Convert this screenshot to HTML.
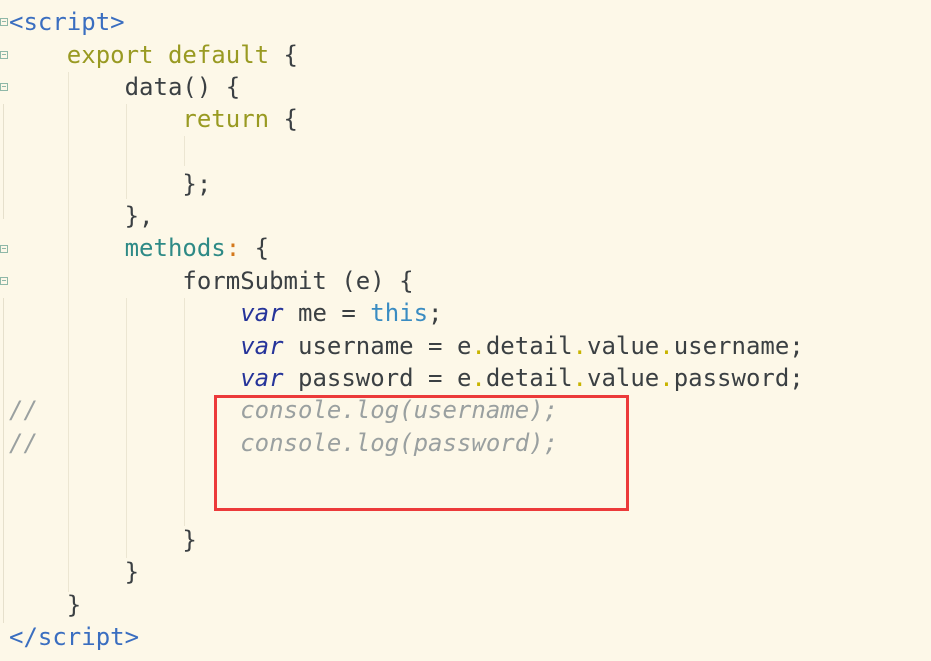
<!DOCTYPE html>
<html><head><meta charset="utf-8"><style>
html,body{margin:0;padding:0}
body{width:931px;height:661px;background:#fdf8e8;position:relative;overflow:hidden;font-family:"DejaVu Sans Mono","Liberation Mono",monospace;font-size:24px;color:#3b4043}
.l{position:absolute;left:9px;height:32px;line-height:32px;white-space:pre}
.g{position:absolute;width:1px;background:#ece6d2}
.f{position:absolute;left:0;width:6px;height:6px;border:1px solid #8fb8a8;font-size:0}
.f::after{content:"";position:absolute;left:1px;top:2px;width:4px;height:1px;background:#8fb8a8}
.tag{color:#3a6ec0}.kw{color:#999a22}.v{color:#26349a;font-style:italic}.th{color:#3a8cc2}
.m{color:#2e8a86}.o{color:#d4781c}.d{color:#c8b400}.c{color:#9aa0a0;font-style:italic}
.box{position:absolute;left:214px;top:395px;width:409px;height:110px;border:3px solid #ec3a3a}
</style></head><body>
<div class="g" style="left:68px;top:72px;height:520px"></div>
<div class="g" style="left:126px;top:104px;height:95px"></div>
<div class="g" style="left:126px;top:298px;height:260px"></div>
<div class="g" style="left:184px;top:136px;height:30px"></div>
<div class="g" style="left:184px;top:298px;height:228px"></div>
<div class="g" style="left:3px;top:104px;height:115px;background:#e6e0cc"></div>
<div class="g" style="left:3px;top:298px;height:325px;background:#e6e0cc"></div>
<div class="f" style="top:18px"></div>
<div class="f" style="top:51px"></div>
<div class="f" style="top:83px"></div>
<div class="f" style="top:245px"></div>
<div class="f" style="top:277px"></div>
<div class="l" style="top:6px"><span class="tag">&lt;script&gt;</span></div>
<div class="l" style="top:39px">    <span class="kw">export default</span> {</div>
<div class="l" style="top:71px">        data() {</div>
<div class="l" style="top:103px">            <span class="kw">return</span> {</div>
<div class="l" style="top:168px">            };</div>
<div class="l" style="top:200px">        },</div>
<div class="l" style="top:232px">        <span class="m">methods</span><span class="o">:</span> {</div>
<div class="l" style="top:265px">            formSubmit (e) {</div>
<div class="l" style="top:297px">                <span class="v">var</span> me = <span class="th">this</span>;</div>
<div class="l" style="top:330px">                <span class="v">var</span> username = e<span class="d">.</span>detail<span class="d">.</span>value<span class="d">.</span>username;</div>
<div class="l" style="top:362px">                <span class="v">var</span> password = e<span class="d">.</span>detail<span class="d">.</span>value<span class="d">.</span>password;</div>
<div class="l c" style="top:394px">//              console.log(username);</div>
<div class="l c" style="top:427px">//              console.log(password);</div>
<div class="l" style="top:524px">            }</div>
<div class="l" style="top:556px">        }</div>
<div class="l" style="top:589px">    }</div>
<div class="l" style="top:621px"><span class="tag">&lt;/script&gt;</span></div>
<div class="box"></div>
</body></html>
